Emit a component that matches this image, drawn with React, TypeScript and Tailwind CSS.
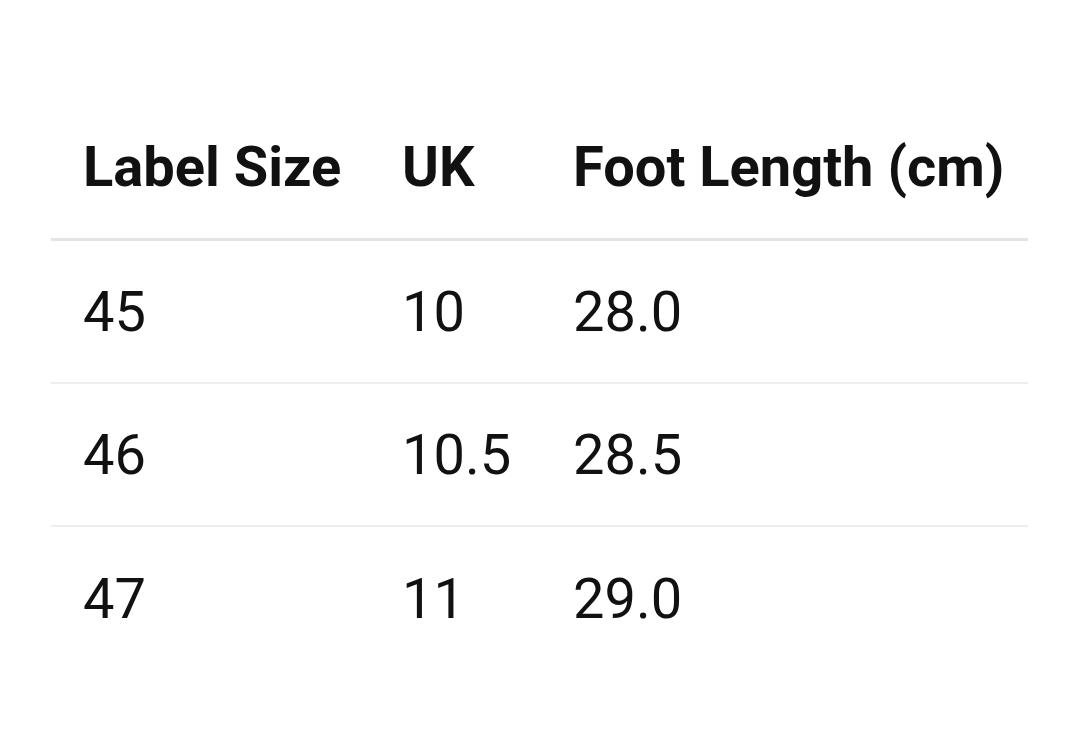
const rows = [
  { label: "45", uk: "10", foot: "28.0" },
  { label: "46", uk: "10.5", foot: "28.5" },
  { label: "47", uk: "11", foot: "29.0" },
];

const App: React.FC = () => {
  return (
    <div className="w-full h-[749px] bg-white pt-[95px] font-['Roboto',sans-serif] text-[#111111]">
      <div className="ml-[51px] w-[977px]">
        <div className="grid grid-cols-[319px_171px_487px] h-[146px] border-b-[3px] border-[#e4e4e4] items-center text-[56px] font-bold">
          <div className="pl-8">Label Size</div>
          <div className="pl-8">UK</div>
          <div className="pl-8">Foot Length (cm)</div>
        </div>
        {rows.map((r, i) => (
          <div
            key={r.label}
            className={
              i < rows.length - 1
                ? "grid grid-cols-[319px_171px_487px] h-[143px] border-b-2 border-[#eeeeee] items-center text-[56px]"
                : "grid grid-cols-[319px_171px_487px] h-[143px] items-center text-[56px]"
            }
          >
            <div className="pl-8">{r.label}</div>
            <div className="pl-8">{r.uk}</div>
            <div className="pl-8">{r.foot}</div>
          </div>
        ))}
      </div>
    </div>
  );
};

export default App;
